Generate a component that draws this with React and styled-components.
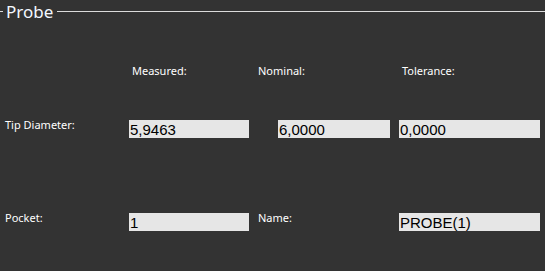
import React from "react";
import styled, { createGlobalStyle } from "styled-components";

const Global = createGlobalStyle`
  html, body { margin: 0; padding: 0; background: #333333; }
  body { width: 545px; height: 271px; overflow: hidden; }
`;

const Panel = styled.div`
  width: 545px;
  height: 271px;
  background: #333333;
  font-family: "Noto Sans", "Open Sans", sans-serif;
  color: #ffffff;
  box-sizing: border-box;
`;

const Legend = styled.div`
  display: flex;
  align-items: center;
  height: 22px;
`;

const Rule = styled.div`
  height: 1px;
  background: #dcdcdc;
  width: ${(p) => (p.$short ? "3px" : "auto")};
  flex: ${(p) => (p.$short ? "none" : "1")};
`;

const Title = styled.span`
  font-size: 17px;
  line-height: 22px;
  padding: 0 4px 0 3px;
  color: #f4f8ff;
  position: relative;
  top: 1px;
`;

const Grid = styled.div`
  display: grid;
  grid-template-columns: 124px 129px 141px 141px;
  grid-template-rows: 56px 93px 20px;
  padding: 42px 0 0 5px;
`;

const Label = styled.div`
  font-size: 11px;
  line-height: 14px;
  margin-top: ${(p) => p.$top || 0}px;
  margin-left: ${(p) => p.$indent || 0}px;
  white-space: nowrap;
`;

const Field = styled.div`
  width: ${(p) => p.$w}px;
  height: 18px;
  margin-left: ${(p) => p.$indent || 0}px;
  background: #e6e6e6;
  color: #000000;
  font-family: "Liberation Sans", Arial, sans-serif;
  font-size: 15px;
  line-height: 19px;
  padding-left: 1px;
  box-sizing: border-box;
  white-space: nowrap;
  overflow: hidden;
`;

export default function App() {
  return (
    <>
      <Global />
      <Panel>
        <Legend>
          <Rule $short />
          <Title>Probe</Title>
          <Rule />
        </Legend>
        <Grid>
          <div />
          <Label $indent={3}>Measured:</Label>
          <Label>Nominal:</Label>
          <Label $indent={3}>Tolerance:</Label>

          <Label $top={-2}>Tip Diameter:</Label>
          <Field $w={120}>5,9463</Field>
          <Field $w={112} $indent={20}>6,0000</Field>
          <Field $w={141}>0,0000</Field>

          <Label $top={-2}>Pocket:</Label>
          <Field $w={120}>1</Field>
          <Label $top={-2}>Name:</Label>
          <Field $w={141}>PROBE(1)</Field>
        </Grid>
      </Panel>
    </>
  );
}
